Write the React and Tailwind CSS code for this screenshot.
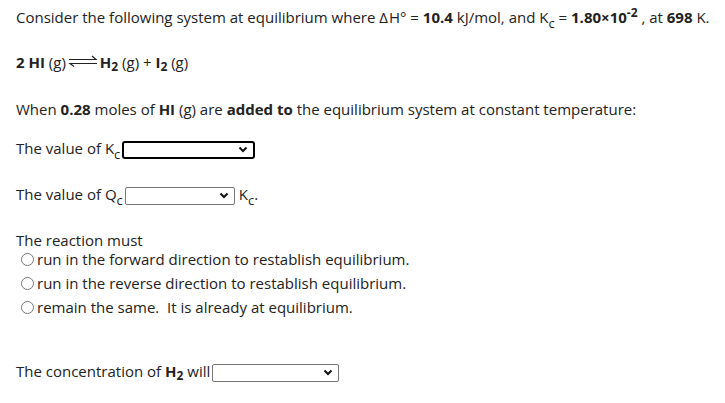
import React from 'react';

const Chevron = () => (
  <svg width="10" height="7" viewBox="0 0 10 7" className="shrink-0">
    <path d="M1.5 1.5 L5 5 L8.5 1.5" fill="none" stroke="#111" strokeWidth="2" />
  </svg>
);

const Select = ({ width, focused }) => (
  <span
    className={
      'inline-flex items-center justify-end pr-[5px] h-[18px] align-middle bg-white ' +
      (focused ? 'border-2 border-black rounded-[3px]' : 'border border-[#767676] rounded-[2px]')
    }
    style={{ width }}
  >
    <Chevron />
  </span>
);

const Radio = () => (
  <span className="inline-block w-[13px] h-[13px] rounded-full border border-[#767676] bg-white ml-[1px] mr-[3px] align-[-1px]" />
);

const EqArrow = () => (
  <svg width="30" height="12" viewBox="0 0 30 12" className="inline-block mx-[2px] align-[1px]">
    <path d="M1 4.5 H28 L24 1" fill="none" stroke="#222" strokeWidth="1.2" />
    <path d="M29 8.5 H2 L6 11.5" fill="none" stroke="#222" strokeWidth="1.2" />
  </svg>
);

const Sub = ({ children }) => (
  <sub className="text-[13px] bottom-[-5px]">{children}</sub>
);

export default function App() {
  return (
    <div className="w-[725px] h-[403px] bg-white text-[15px] text-[#222] px-[16px] pt-[6px]" style={{ fontFamily: '"Open Sans", sans-serif' }}>
      <p className="leading-[22px] whitespace-nowrap">
        Consider the following system at equilibrium where <span className="tracking-[1px]">Δ</span>H° = <b>10.4</b> kJ/mol, and K<Sub>c</Sub> = <b>1.80×10<sup className="text-[12px]">-2</sup></b> , at <b>698</b> K.
      </p>
      <p className="mt-[23px] leading-[22px] whitespace-nowrap">
        <b>2 HI</b> (g)<EqArrow /><b>H<sub className="text-[12px]">2</sub></b> (g) + <b>I<sub className="text-[12px]">2</sub></b> (g)
      </p>
      <p className="mt-[25px] leading-[22px] whitespace-nowrap">
        When <b>0.28</b> moles of <b>HI</b> (g) are <b>added to</b> the equilibrium system at constant temperature:
      </p>
      <div className="mt-[17px] flex items-center h-[22px] whitespace-nowrap">
        <span>The value of K<Sub>c</Sub></span>
        <span className="ml-[2px]"><Select width="133px" focused /></span>
      </div>
      <div className="mt-[24px] flex items-center h-[22px] whitespace-nowrap">
        <span>The value of Q<Sub>c</Sub></span>
        <span className="ml-[2px]"><Select width="110px" /></span>
        <span className="ml-[4px]">K<Sub>c</Sub>.</span>
      </div>
      <p className="mt-[25px] leading-[20px]">The reaction must</p>
      <div className="pl-[4px] leading-[24px] mt-[-3px]">
        <div><Radio />run in the forward direction to restablish equilibrium.</div>
        <div><Radio />run in the reverse direction to restablish equilibrium.</div>
        <div><Radio />remain the same.&nbsp; It is already at equilibrium.</div>
      </div>
      <div className="mt-[41px] flex items-center h-[22px] whitespace-nowrap">
        <span>The concentration of <b>H<sub className="text-[12px]">2</sub></b> will</span>
        <span className="ml-[2px]"><Select width="127px" /></span>
      </div>
    </div>
  );
}
